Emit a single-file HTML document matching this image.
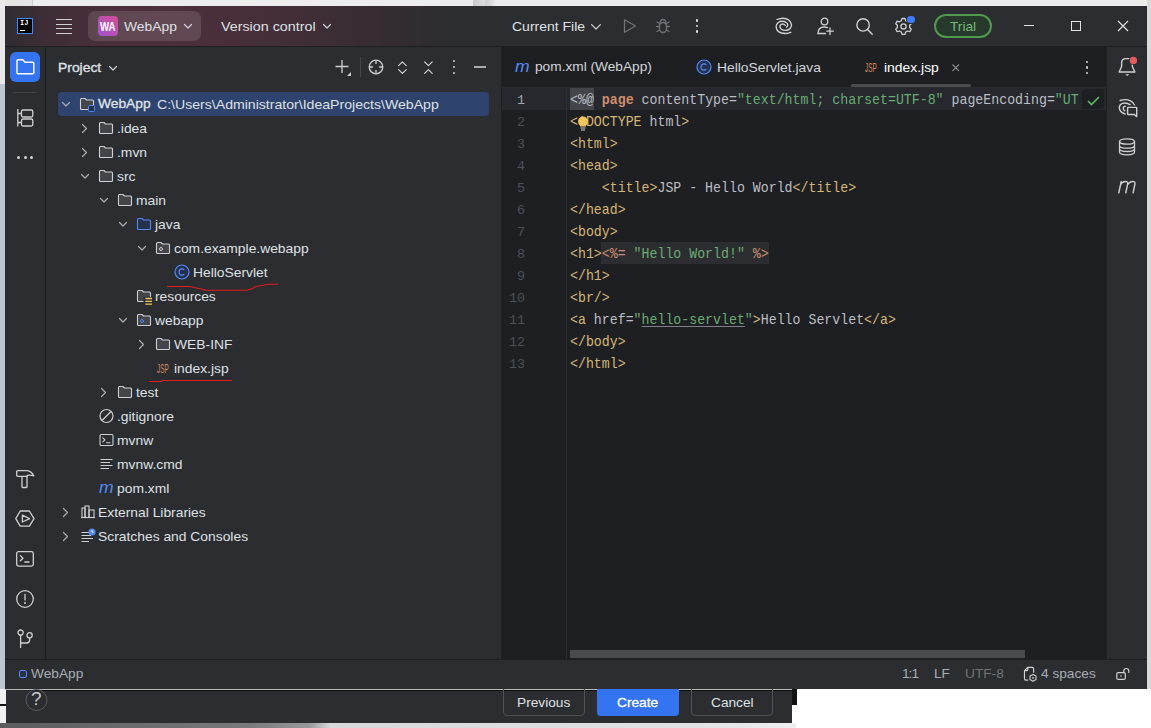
<!DOCTYPE html>
<html><head><meta charset="utf-8">
<style>
*{margin:0;padding:0;box-sizing:border-box}
html,body{width:1151px;height:728px;overflow:hidden;background:#ffffff}
body{position:relative;font-family:"Liberation Sans",sans-serif}
div,span.t{position:absolute}
.t{font-family:"Liberation Sans",sans-serif;color:#DFE1E5;font-size:13.7px;white-space:nowrap;line-height:16px;transform-origin:0 0;transform:scaleY(0.92)}
.code{position:absolute;font-family:"Liberation Mono",monospace;white-space:pre;font-size:14.6px;line-height:22px;color:#BCBEC4;left:570px;padding-top:0.5px;transform-origin:0 0;transform:scaleX(0.9075)}
svg{position:absolute;overflow:visible}
.ic{fill:none;stroke:#CED0D6;stroke-width:1.2;stroke-linecap:round;stroke-linejoin:round}
</style></head><body>

<div style="left:0;top:0;width:1151px;height:6px;background:#ededed"></div>
<div style="left:0;top:0;width:32px;height:6px;background:#e4e4e4"></div>
<div style="left:32px;top:0;width:1px;height:6px;background:#d0d0d0"></div>
<div style="left:473px;top:0;width:22px;height:6px;background:linear-gradient(90deg,#c8c8c8,#dadada 50%,#cfcfcf 60%,#e6e6e6)"></div>
<div style="left:0;top:0;width:5px;height:84px;background:#e8e8e8"></div>
<div style="left:0;top:84px;width:5px;height:605px;background:#bfc6d1"></div>
<div style="left:0;top:689px;width:7px;height:39px;background:#f0f0f0"></div>
<div style="left:0;top:704px;width:7px;height:1.5px;background:#111"></div>
<div style="left:1147px;top:0;width:4px;height:689px;background:#d9d9d9"></div>
<div style="left:6px;top:689px;width:786px;height:34px;background:#2B2D30"></div>
<div style="left:5px;top:689px;width:788px;height:1px;background:#b9b9b9"></div>
<div style="left:30px;top:690px;width:763px;height:1px;background:#0e0e0f"></div>
<div style="left:792px;top:689px;width:5px;height:16px;background:#111"></div>
<div style="left:0;top:723px;width:796px;height:5px;background:linear-gradient(90deg,#5c5c5c 0px,#7a7a7a 250px,#9a9a9a 310px,#d8d8d8 330px,#e2e2e2 700px,#eeeeee 796px)"></div>
<svg style="left:25px;top:689px" width="24" height="24"><circle cx="11.5" cy="11" r="10.5" fill="none" stroke="#5a5d63" stroke-width="1"/></svg>
<span class="t" style="left:31px;top:690px;font-size:19px;line-height:20px;color:#C4C6CC">?</span>
<div style="left:503px;top:686px;width:82px;height:30px;border:1px solid #4E5157;border-radius:4px"></div>
<span class="t" style="left:517px;top:696px;color:#DFE1E5">Previous</span>
<div style="left:597px;top:686px;width:82px;height:30px;background:#3574F0;border-radius:4px"></div>
<span class="t" style="left:617px;top:696px;color:#FFFFFF;-webkit-text-stroke:0.3px #fff">Create</span>
<div style="left:691px;top:686px;width:82px;height:30px;border:1px solid #4E5157;border-radius:4px"></div>
<span class="t" style="left:711px;top:696px;color:#DFE1E5">Cancel</span>
<div style="left:5px;top:6px;width:1142px;height:683px;background:#2B2D30"></div>
<div style="left:5px;top:6px;width:1142px;height:40px;background:linear-gradient(90deg,#2f2c31 0px,#3e2d37 40px,#4b2f3c 110px,#4d2f3d 170px,#432e38 280px,#352c33 380px,#2B2D30 450px)"></div>
<div style="left:5px;top:46px;width:1142px;height:1px;background:#1E1F22"></div>
<div style="left:17px;top:18px;width:16px;height:16px;background:#000;border:1.5px solid #3D8BFF"></div>
<span class="t" style="left:20px;top:19px;font-size:7px;line-height:8px;color:#fff;font-weight:bold;font-family:'Liberation Mono',monospace">IJ</span>
<div style="left:20px;top:29.6px;width:5px;height:1.3px;background:#fff"></div>
<div style="left:56px;top:19px;width:16px;height:1.3px;background:#CED0D6"></div>
<div style="left:56px;top:23.5px;width:16px;height:1.3px;background:#CED0D6"></div>
<div style="left:56px;top:28px;width:16px;height:1.3px;background:#CED0D6"></div>
<div style="left:56px;top:32.5px;width:16px;height:1.3px;background:#CED0D6"></div>
<div style="left:88px;top:11px;width:113px;height:30px;border-radius:7px;background:rgba(255,255,255,0.12)"></div>
<div style="left:98px;top:16px;width:20px;height:20px;border-radius:4px;background:linear-gradient(45deg,#9f52d4,#d24e90)"></div>
<svg style="left:99.5px;top:21px" width="16" height="10"><text x="0" y="9.7" textLength="15.5" lengthAdjust="spacingAndGlyphs" font-family="Liberation Sans" font-size="13" font-weight="bold" fill="#fff">WA</text></svg>
<span class="t" style="left:124px;top:19px;font-size:13.85px">WebApp</span>
<svg style="left:183.5px;top:24px" width="8" height="5"><path d="M0.5 0.5 L4.0 4 L7.5 0.5" fill="none" stroke="#CED0D6" stroke-width="1.2" stroke-linecap="round" stroke-linejoin="round"/></svg>
<span class="t" style="left:221px;top:19px;font-size:14.3px">Version control</span>
<svg style="left:323px;top:24px" width="8" height="5"><path d="M0.5 0.5 L4.0 4 L7.5 0.5" fill="none" stroke="#CED0D6" stroke-width="1.2" stroke-linecap="round" stroke-linejoin="round"/></svg>
<span class="t" style="left:512px;top:19px;font-size:14px">Current File</span>
<svg style="left:591px;top:24px" width="10" height="6"><path d="M0.6 0.6 L5 5 L9.4 0.6" fill="none" stroke="#CED0D6" stroke-width="1.2" stroke-linecap="round" stroke-linejoin="round"/></svg>
<svg style="left:622px;top:18px" width="16" height="16"><path d="M2.5 1.8 L13.5 8 L2.5 14.2 Z" fill="none" stroke="#6F737A" stroke-width="1.3" stroke-linejoin="round"/></svg>
<svg style="left:655px;top:18px" width="16" height="16"><g fill="none" stroke="#6C6F75" stroke-width="1.4" stroke-linecap="round"><path d="M5 6 Q5 1.5 8 1.5 Q11 1.5 11 6"/><rect x="4.5" y="4.5" width="7" height="10" rx="3.5"/><path d="M4.5 8.5 H1.5 M11.5 8.5 H14.5 M4.5 5.5 L2 4 M11.5 5.5 L14 4 M4.5 12 L2 13.5 M11.5 12 L14 13.5"/></g></svg>
<div style="left:696px;top:19.3px;width:2.4px;height:2.4px;border-radius:1.2px;background:#DFE1E5"></div>
<div style="left:696px;top:24.8px;width:2.4px;height:2.4px;border-radius:1.2px;background:#DFE1E5"></div>
<div style="left:696px;top:30.3px;width:2.4px;height:2.4px;border-radius:1.2px;background:#DFE1E5"></div>
<svg style="left:770px;top:14px" width="30" height="24"><g fill="none" stroke="#CED0D6" stroke-width="1.4" stroke-linecap="round"><path d="M7.10 5.40 C8.12 5.22 11.30 4.22 13.20 4.30 C15.10 4.38 17.13 4.92 18.50 5.90 C19.87 6.88 21.08 8.82 21.40 10.20 C21.72 11.58 21.17 13.20 20.40 14.20 C19.63 15.20 18.20 15.950 16.80 16.20 C15.40 16.45 13.13 16.20 12.00 15.70 C10.87 15.20 10.17 14.05 10.00 13.20 C9.83 12.35 10.42 11.12 11.00 10.60 C11.58 10.08 12.80 9.98 13.50 10.10 C14.20 10.22 14.92 11.10 15.20 11.30"/><path d="M20.80 18.30 C19.92 18.50 17.55 19.62 15.50 19.50 C13.45 19.38 10.07 18.77 8.50 17.60 C6.93 16.43 6.13 14.02 6.10 12.50 C6.07 10.98 7.22 9.37 8.30 8.50 C9.38 7.63 11.28 7.30 12.60 7.30 C13.92 7.30 15.33 7.92 16.20 8.50 C17.07 9.08 17.75 10.020 17.80 10.80 C17.85 11.58 17.05 12.87 16.50 13.20"/></g></svg>
<svg style="left:817px;top:17px" width="18" height="18"><g fill="none" stroke="#CED0D6" stroke-width="1.3" stroke-linecap="round"><circle cx="7.5" cy="4.5" r="3.3"/><path d="M1 16.5 C1 11.5 4 10 7.5 10 C8.5 10 9.5 10.2 10.5 10.6"/><path d="M1 16.5 H8.5"/><path d="M13 11 V17.5 M9.8 14.2 H16.3"/></g></svg>
<svg style="left:856px;top:18px" width="18" height="18"><g fill="none" stroke="#CED0D6" stroke-width="1.4" stroke-linecap="round"><circle cx="7.1" cy="6.9" r="6.2"/><path d="M11.6 11.4 L16.2 16.2"/></g></svg>
<svg style="left:895px;top:17px" width="18" height="18"><g fill="none" stroke="#CED0D6" stroke-width="1.3" stroke-linejoin="round"><path d="M7 1.5 H10 L10.6 3.7 L12.6 4.8 L14.8 4.1 L16.3 6.7 L14.6 8.3 V10.5 L16.3 12.1 L14.8 14.7 L12.6 14 L10.6 15.1 L10 17.3 H7 L6.4 15.1 L4.4 14 L2.2 14.7 L0.7 12.1 L2.4 10.5 V8.3 L0.7 6.7 L2.2 4.1 L4.4 4.8 L6.4 3.7 Z"/><circle cx="8.5" cy="9.4" r="2.6"/></g></svg>
<div style="left:907px;top:15.5px;width:7.5px;height:7.5px;border-radius:4px;background:#3D7DFF;box-shadow:0 0 0 1px #2B2D30"></div>
<div style="left:934px;top:14px;width:58px;height:24px;border-radius:12px;background:#27392A;border:2px solid #51994F"></div>
<span class="t" style="left:950px;top:20px;color:#73BD79">Trial</span>
<div style="left:1024px;top:25px;width:10px;height:1.2px;background:#DFE1E5"></div>
<div style="left:1071px;top:21px;width:10px;height:10px;border:1.2px solid #DFE1E5"></div>
<svg style="left:1118px;top:20.5px" width="10" height="10"><path d="M0 0 L10 10 M10 0 L0 10" stroke="#DFE1E5" stroke-width="1.2"/></svg>
<div style="left:45px;top:47px;width:1px;height:612px;background:#1E1F22"></div>
<div style="left:10px;top:52px;width:30px;height:30px;border-radius:6px;background:#3574F0"></div>
<svg style="left:16px;top:59px" width="19" height="16"><path d="M1 1.8 Q1 0.8 2 0.8 H6.8 L9 3.2 H16.8 Q17.8 3.2 17.8 4.2 V13.8 Q17.8 14.8 16.8 14.8 H2 Q1 14.8 1 13.8 Z" fill="none" stroke="#fff" stroke-width="1.4" stroke-linejoin="round"/></svg>
<div style="left:13px;top:92px;width:24px;height:1px;background:#43454A"></div>
<svg style="left:17px;top:108px" width="17" height="20"><g fill="none" stroke="#CED0D6" stroke-width="1.3"><path d="M0.8 1 V18.5 M0.8 5.5 H4.5 M0.8 14.5 H4.5"/><rect x="4.5" y="2" width="11.3" height="7" rx="1.5"/><rect x="4.5" y="11" width="11.3" height="7" rx="1.5"/></g></svg>
<div style="left:17.0px;top:156.2px;width:3px;height:3px;border-radius:1.5px;background:#CED0D6"></div>
<div style="left:23.5px;top:156.2px;width:3px;height:3px;border-radius:1.5px;background:#CED0D6"></div>
<div style="left:30.0px;top:156.2px;width:3px;height:3px;border-radius:1.5px;background:#CED0D6"></div>
<svg style="left:16px;top:470px" width="19" height="19"><g fill="none" stroke="#CED0D6" stroke-width="1.3" stroke-linejoin="round"><path d="M0.7 1.8 Q0.7 0.7 1.8 0.7 H10 Q15.2 0.7 17.8 5.8 Q14.5 4.6 11.2 5.3 V6.3 H1.8 Q0.7 6.3 0.7 5.2 Z"/><path d="M6 6.3 V16.8 Q6 17.5 6.7 17.5 H10.3 Q11 17.5 11 16.8 V6.3"/></g></svg>
<svg style="left:15px;top:510px" width="20" height="18"><g fill="none" stroke="#CED0D6" stroke-width="1.3" stroke-linejoin="round"><path d="M5.2 1 H14.4 L19 8.6 L14.4 16.2 H5.2 L0.8 8.6 Z"/><path d="M7.4 5.2 L14.6 8.6 L7.4 12 Z"/></g></svg>
<svg style="left:16px;top:551px" width="18" height="16"><g fill="none" stroke="#CED0D6" stroke-width="1.3" stroke-linecap="round" stroke-linejoin="round"><rect x="0.7" y="0.7" width="16.6" height="14.4" rx="1.8"/><path d="M4.3 4.6 L7 7.2 L4.3 9.8 M8.8 11 H13"/></g></svg>
<svg style="left:16px;top:590px" width="18" height="18"><g fill="none" stroke="#CED0D6" stroke-width="1.3" stroke-linecap="round"><circle cx="9" cy="9" r="8.3"/><path d="M9 4.5 V10"/></g><circle cx="9" cy="13" r="1" fill="#CED0D6"/></svg>
<svg style="left:16px;top:629px" width="18" height="20"><g fill="none" stroke="#CED0D6" stroke-width="1.3" stroke-linecap="round"><circle cx="4.6" cy="3.6" r="2.6"/><circle cx="13.6" cy="6.3" r="2.6"/><path d="M4.6 6.2 V18.4 M13.6 8.9 V11 Q13.6 14 10.6 14 H4.6"/></g></svg>
<div style="left:501px;top:47px;width:1px;height:612px;background:#1E1F22"></div>
<span class="t" style="left:58px;top:60px;font-size:13.9px;-webkit-text-stroke:0.35px #DFE1E5">Project</span>
<svg style="left:109px;top:65.5px" width="8" height="5"><path d="M0.5 0.5 L4.0 4 L7.5 0.5" fill="none" stroke="#CED0D6" stroke-width="1.2" stroke-linecap="round" stroke-linejoin="round"/></svg>
<svg style="left:335px;top:60px" width="18" height="16"><g stroke="#CED0D6" stroke-width="1.3"><path d="M7 0 V13 M0.5 6.5 H13.5"/></g><path d="M16 12 V16 H12 Z" fill="#CED0D6"/></svg>
<div style="left:359.5px;top:57px;width:1px;height:20px;background:#43454A"></div>
<svg style="left:368px;top:59px" width="16" height="16"><g fill="none" stroke="#CED0D6" stroke-width="1.3"><circle cx="8" cy="8" r="6.8"/><path d="M8 1.5 V5 M8 11 V14.5 M1.5 8 H5 M11 8 H14.5"/></g></svg>
<svg style="left:397.5px;top:60.5px" width="10" height="14"><g fill="none" stroke="#CED0D6" stroke-width="1.2" stroke-linecap="round" stroke-linejoin="round"><path d="M0.6 4.6 L4.4 0.8 L8.2 4.6 M0.6 8.6 L4.4 12.4 L8.2 8.6"/></g></svg>
<svg style="left:423.8px;top:60.5px" width="10" height="14"><g fill="none" stroke="#CED0D6" stroke-width="1.2" stroke-linecap="round" stroke-linejoin="round"><path d="M0.6 0.8 L4.4 4.6 L8.2 0.8 M0.6 12.4 L4.4 8.6 L8.2 12.4"/></g></svg>
<div style="left:452.8px;top:59.8px;width:2.4px;height:2.4px;border-radius:1.2px;background:#CED0D6"></div>
<div style="left:452.8px;top:65.8px;width:2.4px;height:2.4px;border-radius:1.2px;background:#CED0D6"></div>
<div style="left:452.8px;top:71.8px;width:2.4px;height:2.4px;border-radius:1.2px;background:#CED0D6"></div>
<div style="left:474px;top:66.4px;width:12px;height:1.3px;background:#A8ADB5"></div>
<div style="left:58px;top:92px;width:431px;height:24px;border-radius:4px;background:#2E436E"></div>
<svg style="left:62px;top:101.5px" width="8" height="5"><path d="M0.5 0.5 L4.0 4 L7.5 0.5" fill="none" stroke="#A8ADB5" stroke-width="1.2" stroke-linecap="round" stroke-linejoin="round"/></svg>
<svg style="left:79px;top:96px" width="16" height="16"><path d="M1.5 3.5 Q1.5 2.5 2.5 2.5 H6 L7.5 4 H13.5 Q14.5 4 14.5 5 V12.5 Q14.5 13.5 13.5 13.5 H2.5 Q1.5 13.5 1.5 12.5 Z" fill="#43454A" stroke="#CED0D6" stroke-width="1.1" stroke-linejoin="round"/></svg>
<div style="left:88px;top:105px;width:7px;height:7px;border:1.2px solid #548AF7;border-radius:1.5px;background:#25324D"></div>
<span class="t" style="left:98px;top:97px;font-size:13.8px;-webkit-text-stroke:0.35px #DFE1E5">WebApp</span>
<span class="t" style="left:157px;top:97px;font-size:14.1px">C:\Users\Administrator\IdeaProjects\WebApp</span>
<svg style="left:81.5px;top:123.5px" width="5" height="9"><path d="M0.5 0.5 L4.5 4.5 L0.5 8.5" fill="none" stroke="#A8ADB5" stroke-width="1.2" stroke-linecap="round" stroke-linejoin="round"/></svg>
<svg style="left:98px;top:120px" width="16" height="16"><path d="M1.5 3.5 Q1.5 2.5 2.5 2.5 H6 L7.5 4 H13.5 Q14.5 4 14.5 5 V12.5 Q14.5 13.5 13.5 13.5 H2.5 Q1.5 13.5 1.5 12.5 Z" fill="#43454A" stroke="#CED0D6" stroke-width="1.1" stroke-linejoin="round"/></svg>
<span class="t" style="left:117px;top:121px;font-size:13.85px">.idea</span>
<svg style="left:81.5px;top:147.5px" width="5" height="9"><path d="M0.5 0.5 L4.5 4.5 L0.5 8.5" fill="none" stroke="#A8ADB5" stroke-width="1.2" stroke-linecap="round" stroke-linejoin="round"/></svg>
<svg style="left:98px;top:144px" width="16" height="16"><path d="M1.5 3.5 Q1.5 2.5 2.5 2.5 H6 L7.5 4 H13.5 Q14.5 4 14.5 5 V12.5 Q14.5 13.5 13.5 13.5 H2.5 Q1.5 13.5 1.5 12.5 Z" fill="#43454A" stroke="#CED0D6" stroke-width="1.1" stroke-linejoin="round"/></svg>
<span class="t" style="left:117px;top:145px;font-size:13.85px">.mvn</span>
<svg style="left:81px;top:173.5px" width="8" height="5"><path d="M0.5 0.5 L4.0 4 L7.5 0.5" fill="none" stroke="#A8ADB5" stroke-width="1.2" stroke-linecap="round" stroke-linejoin="round"/></svg>
<svg style="left:98px;top:168px" width="16" height="16"><path d="M1.5 3.5 Q1.5 2.5 2.5 2.5 H6 L7.5 4 H13.5 Q14.5 4 14.5 5 V12.5 Q14.5 13.5 13.5 13.5 H2.5 Q1.5 13.5 1.5 12.5 Z" fill="#43454A" stroke="#CED0D6" stroke-width="1.1" stroke-linejoin="round"/></svg>
<span class="t" style="left:117px;top:169px;font-size:13.85px">src</span>
<svg style="left:100px;top:197.5px" width="8" height="5"><path d="M0.5 0.5 L4.0 4 L7.5 0.5" fill="none" stroke="#A8ADB5" stroke-width="1.2" stroke-linecap="round" stroke-linejoin="round"/></svg>
<svg style="left:117px;top:192px" width="16" height="16"><path d="M1.5 3.5 Q1.5 2.5 2.5 2.5 H6 L7.5 4 H13.5 Q14.5 4 14.5 5 V12.5 Q14.5 13.5 13.5 13.5 H2.5 Q1.5 13.5 1.5 12.5 Z" fill="#43454A" stroke="#CED0D6" stroke-width="1.1" stroke-linejoin="round"/></svg>
<span class="t" style="left:136px;top:193px;font-size:13.85px">main</span>
<svg style="left:119px;top:221.5px" width="8" height="5"><path d="M0.5 0.5 L4.0 4 L7.5 0.5" fill="none" stroke="#A8ADB5" stroke-width="1.2" stroke-linecap="round" stroke-linejoin="round"/></svg>
<svg style="left:136px;top:216px" width="16" height="16"><path d="M1.5 3.5 Q1.5 2.5 2.5 2.5 H6 L7.5 4 H13.5 Q14.5 4 14.5 5 V12.5 Q14.5 13.5 13.5 13.5 H2.5 Q1.5 13.5 1.5 12.5 Z" fill="#25324d" stroke="#548AF7" stroke-width="1.1" stroke-linejoin="round"/></svg>
<span class="t" style="left:155px;top:217px;font-size:13.85px">java</span>
<svg style="left:138px;top:245.5px" width="8" height="5"><path d="M0.5 0.5 L4.0 4 L7.5 0.5" fill="none" stroke="#A8ADB5" stroke-width="1.2" stroke-linecap="round" stroke-linejoin="round"/></svg>
<svg style="left:155px;top:240px" width="16" height="16"><path d="M1.5 3.5 Q1.5 2.5 2.5 2.5 H6 L7.5 4 H13.5 Q14.5 4 14.5 5 V12.5 Q14.5 13.5 13.5 13.5 H2.5 Q1.5 13.5 1.5 12.5 Z" fill="#43454A" stroke="#CED0D6" stroke-width="1.1" stroke-linejoin="round"/></svg>
<div style="left:159.3px;top:247px;width:4.2px;height:4.2px;border:1.1px solid #CED0D6;border-radius:2.1px"></div>
<span class="t" style="left:174px;top:241px;font-size:13.85px">com.example.webapp</span>
<svg style="left:174px;top:264px" width="16" height="16"><circle cx="8" cy="8" r="7" fill="#25324D" stroke="#548AF7" stroke-width="1.2"/><path d="M10.2 5.8 Q9.5 4.8 8.1 4.8 Q5.1 4.8 5.1 8 Q5.1 11.2 8.1 11.2 Q9.5 11.2 10.2 10.2" fill="none" stroke="#548AF7" stroke-width="1.2"/></svg>
<span class="t" style="left:193px;top:265px;font-size:13.85px">HelloServlet</span>
<svg style="left:136px;top:288px" width="16" height="16"><path d="M1.5 3.5 Q1.5 2.5 2.5 2.5 H6 L7.5 4 H13.5 Q14.5 4 14.5 5 V12.5 Q14.5 13.5 13.5 13.5 H2.5 Q1.5 13.5 1.5 12.5 Z" fill="#43454A" stroke="#CED0D6" stroke-width="1.1" stroke-linejoin="round"/></svg>
<svg style="left:143px;top:296px" width="12" height="10"><rect x="0.5" y="0.8" width="9" height="8.6" fill="#2B2D30"/><path d="M2.4 2.5 H9 M2.4 5.3 H9 M2.4 8.1 H9" stroke="#F2C55C" stroke-width="1.3"/></svg>
<span class="t" style="left:155px;top:289px;font-size:13.85px">resources</span>
<svg style="left:119px;top:317.5px" width="8" height="5"><path d="M0.5 0.5 L4.0 4 L7.5 0.5" fill="none" stroke="#A8ADB5" stroke-width="1.2" stroke-linecap="round" stroke-linejoin="round"/></svg>
<svg style="left:136px;top:312px" width="16" height="16"><path d="M1.5 3.5 Q1.5 2.5 2.5 2.5 H6 L7.5 4 H13.5 Q14.5 4 14.5 5 V12.5 Q14.5 13.5 13.5 13.5 H2.5 Q1.5 13.5 1.5 12.5 Z" fill="#43454A" stroke="#CED0D6" stroke-width="1.1" stroke-linejoin="round"/></svg>
<div style="left:140.3px;top:319px;width:4.2px;height:4.2px;border:1.1px solid #548AF7;border-radius:2.1px"></div>
<span class="t" style="left:155px;top:313px;font-size:13.85px">webapp</span>
<svg style="left:138.5px;top:339.5px" width="5" height="9"><path d="M0.5 0.5 L4.5 4.5 L0.5 8.5" fill="none" stroke="#A8ADB5" stroke-width="1.2" stroke-linecap="round" stroke-linejoin="round"/></svg>
<svg style="left:155px;top:336px" width="16" height="16"><path d="M1.5 3.5 Q1.5 2.5 2.5 2.5 H6 L7.5 4 H13.5 Q14.5 4 14.5 5 V12.5 Q14.5 13.5 13.5 13.5 H2.5 Q1.5 13.5 1.5 12.5 Z" fill="#43454A" stroke="#CED0D6" stroke-width="1.1" stroke-linejoin="round"/></svg>
<span class="t" style="left:174px;top:337px;font-size:13.85px">WEB-INF</span>
<svg style="left:157px;top:360px" width="16" height="16"><text x="0" y="13.2" textLength="11.6" lengthAdjust="spacingAndGlyphs" font-family="Liberation Sans" font-size="12.6" fill="#D88A5B">JSP</text></svg>
<span class="t" style="left:174px;top:361px;font-size:13.85px">index.jsp</span>
<svg style="left:100.5px;top:387.5px" width="5" height="9"><path d="M0.5 0.5 L4.5 4.5 L0.5 8.5" fill="none" stroke="#A8ADB5" stroke-width="1.2" stroke-linecap="round" stroke-linejoin="round"/></svg>
<svg style="left:117px;top:384px" width="16" height="16"><path d="M1.5 3.5 Q1.5 2.5 2.5 2.5 H6 L7.5 4 H13.5 Q14.5 4 14.5 5 V12.5 Q14.5 13.5 13.5 13.5 H2.5 Q1.5 13.5 1.5 12.5 Z" fill="#43454A" stroke="#CED0D6" stroke-width="1.1" stroke-linejoin="round"/></svg>
<span class="t" style="left:136px;top:385px;font-size:13.85px">test</span>
<svg style="left:99px;top:408px" width="16" height="16"><g fill="none" stroke="#CED0D6" stroke-width="1.2"><circle cx="7.5" cy="8" r="6.5"/><path d="M3 12.5 L12 3.5"/></g></svg>
<span class="t" style="left:117px;top:409px;font-size:13.85px">.gitignore</span>
<svg style="left:99px;top:432px" width="16" height="16"><g fill="none" stroke="#CED0D6" stroke-width="1.1" stroke-linecap="round" stroke-linejoin="round"><rect x="1" y="2.5" width="13" height="11" rx="1.3"/><path d="M3.8 5.8 L6 7.8 L3.8 9.8 M7.5 10.8 H11"/></g></svg>
<span class="t" style="left:117px;top:433px;font-size:13.85px">mvnw</span>
<svg style="left:99px;top:456px" width="16" height="16"><path d="M1.5 3.5 H13.5 M1.5 6.5 H11 M1.5 9.5 H13.5 M1.5 12.5 H10" stroke="#CED0D6" stroke-width="1.1"/></svg>
<span class="t" style="left:117px;top:457px;font-size:13.85px">mvnw.cmd</span>
<svg style="left:99px;top:480px" width="16" height="16"><text x="0" y="13.2" textLength="14.6" lengthAdjust="spacingAndGlyphs" font-family="Liberation Sans" font-style="italic" font-size="17" fill="#548AF7">m</text></svg>
<span class="t" style="left:117px;top:481px;font-size:13.85px">pom.xml</span>
<svg style="left:62.5px;top:507.5px" width="5" height="9"><path d="M0.5 0.5 L4.5 4.5 L0.5 8.5" fill="none" stroke="#A8ADB5" stroke-width="1.2" stroke-linecap="round" stroke-linejoin="round"/></svg>
<svg style="left:80px;top:504px" width="16" height="16"><g fill="none" stroke="#CED0D6" stroke-width="1.1"><path d="M1 13.5 H15"/><rect x="2" y="4" width="3" height="9.5"/><rect x="5" y="2" width="4" height="11.5"/><rect x="9" y="6" width="5" height="7.5"/></g></svg>
<span class="t" style="left:98px;top:505px;font-size:13.85px">External Libraries</span>
<svg style="left:62.5px;top:531.5px" width="5" height="9"><path d="M0.5 0.5 L4.5 4.5 L0.5 8.5" fill="none" stroke="#A8ADB5" stroke-width="1.2" stroke-linecap="round" stroke-linejoin="round"/></svg>
<svg style="left:80px;top:528px" width="16" height="16"><path d="M1.5 4.5 H9 M1.5 7.5 H11 M1.5 10.5 H13 M1.5 13.5 H9" stroke="#CED0D6" stroke-width="1.1"/><circle cx="12" cy="4" r="3.6" fill="#548AF7"/><path d="M12 2 V4 H13.5" stroke="#fff" stroke-width="0.9" fill="none"/></svg>
<span class="t" style="left:98px;top:529px;font-size:13.85px">Scratches and Consoles</span>
<svg style="left:0;top:0" width="1" height="1"><path d="M167 286.5 L190 286.5 L194 287.5 L201 289 L206 290.3 L246.5 290.3 L252.5 288.5 L256 286.5 L261.5 285.5 L269 284.3 L278 284.3" fill="none" stroke="#E51B1B" stroke-width="1.1"/></svg>
<svg style="left:0;top:0" width="1" height="1"><path d="M149 381.5 L161.5 381.5 L162.5 380.5 L232 380.5" fill="none" stroke="#E51B1B" stroke-width="1.1"/></svg>
<div style="left:502px;top:47px;width:604px;height:612px;background:#1E1F22"></div>
<div style="left:502px;top:87px;width:604px;height:1px;background:#2B2D30"></div>
<svg style="left:515px;top:60px" width="16" height="14"><text x="0" y="12.2" textLength="14.6" lengthAdjust="spacingAndGlyphs" font-family="Liberation Sans" font-style="italic" font-size="17" fill="#548AF7">m</text></svg>
<span class="t" style="left:535px;top:60px;color:#D3D5DA">pom.xml (WebApp)</span>
<svg style="left:696px;top:59px" width="16" height="16"><circle cx="8" cy="8" r="7" fill="#25324D" stroke="#548AF7" stroke-width="1.2"/><path d="M10.2 5.8 Q9.5 4.8 8.1 4.8 Q5.1 4.8 5.1 8 Q5.1 11.2 8.1 11.2 Q9.5 11.2 10.2 10.2" fill="none" stroke="#548AF7" stroke-width="1.2"/></svg>
<span class="t" style="left:717px;top:60px;color:#D3D5DA;font-size:13.85px">HelloServlet.java</span>
<svg style="left:865px;top:59px" width="16" height="16"><text x="0" y="13.2" textLength="11.6" lengthAdjust="spacingAndGlyphs" font-family="Liberation Sans" font-size="12.6" fill="#D88A5B">JSP</text></svg>
<span class="t" style="left:884px;top:60px;color:#FFFFFF;font-size:13.9px">index.jsp</span>
<svg style="left:951.5px;top:63.5px" width="8" height="8"><path d="M0.5 0.5 L7 7 M7 0.5 L0.5 7" stroke="#868A91" stroke-width="1.1"/></svg>
<div style="left:851px;top:84px;width:120px;height:3px;border-radius:1.5px;background:#4A4C50"></div>
<div style="left:1085.6px;top:60.8px;width:2.4px;height:2.4px;border-radius:1.2px;background:#CED0D6"></div>
<div style="left:1085.6px;top:66.3px;width:2.4px;height:2.4px;border-radius:1.2px;background:#CED0D6"></div>
<div style="left:1085.6px;top:71.8px;width:2.4px;height:2.4px;border-radius:1.2px;background:#CED0D6"></div>
<div style="left:502px;top:88px;width:604px;height:22px;background:#26282E"></div>
<div style="left:569.5px;top:88px;width:24.5px;height:22px;background:#43454A"></div>
<div style="left:601px;top:242px;width:168px;height:22px;background:#2B2D30"></div>
<div style="left:566px;top:88px;width:1px;height:571px;background:#2B2D30"></div>
<span class="t mono" style="left:460px;width:65px;text-align:right;top:89.5px;font-family:'Liberation Mono',monospace;font-size:13.33px;line-height:22px;color:#A1A3AB;transform:none">1</span>
<span class="t mono" style="left:460px;width:65px;text-align:right;top:111.5px;font-family:'Liberation Mono',monospace;font-size:13.33px;line-height:22px;color:#4B5059;transform:none">2</span>
<span class="t mono" style="left:460px;width:65px;text-align:right;top:133.5px;font-family:'Liberation Mono',monospace;font-size:13.33px;line-height:22px;color:#4B5059;transform:none">3</span>
<span class="t mono" style="left:460px;width:65px;text-align:right;top:155.5px;font-family:'Liberation Mono',monospace;font-size:13.33px;line-height:22px;color:#4B5059;transform:none">4</span>
<span class="t mono" style="left:460px;width:65px;text-align:right;top:177.5px;font-family:'Liberation Mono',monospace;font-size:13.33px;line-height:22px;color:#4B5059;transform:none">5</span>
<span class="t mono" style="left:460px;width:65px;text-align:right;top:199.5px;font-family:'Liberation Mono',monospace;font-size:13.33px;line-height:22px;color:#4B5059;transform:none">6</span>
<span class="t mono" style="left:460px;width:65px;text-align:right;top:221.5px;font-family:'Liberation Mono',monospace;font-size:13.33px;line-height:22px;color:#4B5059;transform:none">7</span>
<span class="t mono" style="left:460px;width:65px;text-align:right;top:243.5px;font-family:'Liberation Mono',monospace;font-size:13.33px;line-height:22px;color:#4B5059;transform:none">8</span>
<span class="t mono" style="left:460px;width:65px;text-align:right;top:265.5px;font-family:'Liberation Mono',monospace;font-size:13.33px;line-height:22px;color:#4B5059;transform:none">9</span>
<span class="t mono" style="left:460px;width:65px;text-align:right;top:287.5px;font-family:'Liberation Mono',monospace;font-size:13.33px;line-height:22px;color:#4B5059;transform:none">10</span>
<span class="t mono" style="left:460px;width:65px;text-align:right;top:309.5px;font-family:'Liberation Mono',monospace;font-size:13.33px;line-height:22px;color:#4B5059;transform:none">11</span>
<span class="t mono" style="left:460px;width:65px;text-align:right;top:331.5px;font-family:'Liberation Mono',monospace;font-size:13.33px;line-height:22px;color:#4B5059;transform:none">12</span>
<span class="t mono" style="left:460px;width:65px;text-align:right;top:353.5px;font-family:'Liberation Mono',monospace;font-size:13.33px;line-height:22px;color:#4B5059;transform:none">13</span>
<div class="code" style="top:88px"><span style="color:#BCBEC4;">&lt;%@</span> <span style="color:#CF8E6D;font-weight:bold">page</span> <span style="color:#BCBEC4;">contentType=</span><span style="color:#6AAB73;">"text/html; charset=UTF-8"</span> <span style="color:#BCBEC4;">pageEncoding=</span><span style="color:#6AAB73;">"UT</span></div>
<div class="code" style="top:110px"><span style="color:#D5B778;">&lt;!DOCTYPE</span><span style="color:#BCBEC4;"> html</span><span style="color:#D5B778;">&gt;</span></div>
<div class="code" style="top:132px"><span style="color:#D5B778;">&lt;html&gt;</span></div>
<div class="code" style="top:154px"><span style="color:#D5B778;">&lt;head&gt;</span></div>
<div class="code" style="top:176px">    <span style="color:#D5B778;">&lt;title&gt;</span><span style="color:#BCBEC4;">JSP - Hello World</span><span style="color:#D5B778;">&lt;/title&gt;</span></div>
<div class="code" style="top:198px"><span style="color:#D5B778;">&lt;/head&gt;</span></div>
<div class="code" style="top:220px"><span style="color:#D5B778;">&lt;body&gt;</span></div>
<div class="code" style="top:242px"><span style="color:#D5B778;">&lt;h1&gt;</span><span style="color:#CF8E6D;">&lt;%=</span> <span style="color:#6AAB73;">"Hello World!"</span> <span style="color:#CF8E6D;">%&gt;</span></div>
<div class="code" style="top:264px"><span style="color:#D5B778;">&lt;/h1&gt;</span></div>
<div class="code" style="top:286px"><span style="color:#D5B778;">&lt;br/&gt;</span></div>
<div class="code" style="top:308px"><span style="color:#D5B778;">&lt;a</span><span style="color:#BCBEC4;"> href=</span><span style="color:#6AAB73;">"</span><span style="color:#6AAB73;text-decoration:underline;text-decoration-color:#7E8188;text-underline-offset:2px">hello-servlet</span><span style="color:#6AAB73;">"</span><span style="color:#D5B778;">&gt;</span><span style="color:#BCBEC4;">Hello Servlet</span><span style="color:#D5B778;">&lt;/a&gt;</span></div>
<div class="code" style="top:330px"><span style="color:#D5B778;">&lt;/body&gt;</span></div>
<div class="code" style="top:352px"><span style="color:#D5B778;">&lt;/html&gt;</span></div>
<svg style="left:577px;top:116px" width="12" height="16"><path d="M1 5.5 A5 5 0 1 1 11 5.5 Q11 8 9 9.5 V10.5 H3 V9.5 Q1 8 1 5.5 Z" fill="#F2C55C"/><path d="M3.5 12 H8.5 M4 14 H8" stroke="#CED0D6" stroke-width="1"/></svg>
<div style="left:1082px;top:89px;width:22px;height:20px;background:#1E1F22;border-radius:3px"></div>
<svg style="left:1087px;top:96px" width="13" height="10"><path d="M1 5 L4.5 8.5 L12 1" fill="none" stroke="#5FB865" stroke-width="1.6"/></svg>
<div style="left:570px;top:650px;width:455px;height:8px;background:#4A4B4E"></div>
<div style="left:1106px;top:47px;width:41px;height:612px;background:#2B2D30;border-left:1px solid #1E1F22"></div>
<svg style="left:1112px;top:52px" width="30" height="30"><g fill="none" stroke="#CED0D6" stroke-width="1.4" stroke-linejoin="round" stroke-linecap="round"><path d="M16.8 6.6 H14 Q9.6 6.6 9.6 11 V14.5 L7.2 20 H22.9 L20.3 14.5 V13.3"/></g><path d="M13.2 22.2 H17.3 L15.25 23.9 Z" fill="#CED0D6"/><circle cx="21.4" cy="8.4" r="3.7" fill="#E55B5B"/></svg>
<svg style="left:1112px;top:94px" width="30" height="30"><g fill="none" stroke="#CED0D6" stroke-width="1.4" stroke-linecap="round" stroke-linejoin="round"><path d="M8.2 6.5 Q14 4.6 18.5 6.8 Q21.6 8.5 22.4 10.9"/><path d="M18.1 10.6 Q14.2 8.2 10.3 9.3 Q7.3 10.6 7.3 13.8 Q7.5 18.2 13.1 20"/><path d="M13.3 12.3 Q11.3 12.3 11.2 14.2 Q11.2 15.9 12.8 16.8"/><path d="M15.6 14.1 Q15.6 13.4 16.3 13.4 H24 Q24.7 13.4 24.7 14.1 V22.6 L22.3 20.5 H16.3 Q15.6 20.5 15.6 19.8 Z"/></g></svg>
<svg style="left:1118px;top:138px" width="18" height="18"><g fill="none" stroke="#CED0D6" stroke-width="1.3"><ellipse cx="9" cy="3.5" rx="7.5" ry="2.7"/><path d="M1.5 3.5 V14 Q1.5 16.8 9 16.8 Q16.5 16.8 16.5 14 V3.5 M1.5 7.5 Q1.5 10.2 9 10.2 Q16.5 10.2 16.5 7.5 M1.5 10.8 Q1.5 13.5 9 13.5 Q16.5 13.5 16.5 10.8"/></g></svg>
<svg style="left:1112px;top:178px" width="30" height="18"><path d="M6.8 14.8 L9.2 3.6 M8.5 6.6 Q10.3 3.4 13.2 3.4 Q16.2 3.5 15.6 6.2 L13.8 14.8 M15.6 6.6 Q17.6 3.4 20.5 3.4 Q23.5 3.5 22.9 6.2 L21.1 14.8" fill="none" stroke="#CED0D6" stroke-width="1.45" stroke-linecap="round" stroke-linejoin="round"/></svg>
<div style="left:5px;top:659px;width:1142px;height:1px;background:#1E1F22"></div>
<div style="left:19px;top:670px;width:8px;height:8px;border:1.3px solid #548AF7;border-radius:2px;background:#25324d"></div>
<span class="t" style="left:31px;top:667px;color:#A8ADB5">WebApp</span>
<span class="t" style="left:902px;top:667px;color:#A8ADB5;letter-spacing:-1px">1:1</span>
<span class="t" style="left:934px;top:667px;color:#A8ADB5">LF</span>
<span class="t" style="left:965px;top:667px;color:#6F737A">UTF-8</span>
<svg style="left:1018px;top:662px" width="22" height="22"><g fill="none" stroke="#CED0D6" stroke-width="1.2" stroke-linejoin="round"><path d="M10.2 18.1 H7.8 Q6.5 18.1 6.5 16.8 V8.6 L9.9 5.3 H14.2 Q15.6 5.3 15.6 6.7 V10.8"/><path d="M6.5 8.6 H8.6 Q9.9 8.6 9.9 7.3 V5.3"/><path d="M15 12.4 L18 14.1 V17.6 L15 19.3 L12 17.6 V14.1 Z" stroke-width="1.1"/></g><circle cx="15" cy="15.9" r="0.9" fill="#CED0D6"/></svg>
<span class="t" style="left:1041px;top:667px;color:#A8ADB5">4 spaces</span>
<svg style="left:1110px;top:662px" width="22" height="22"><g fill="none" stroke="#CED0D6" stroke-width="1.2"><rect x="6.8" y="10.6" width="8.5" height="6.8" rx="1.5"/><path d="M13.8 10.6 V9 A2.5 2.5 0 0 1 18.8 9 V10.4" stroke-linecap="round"/></g><rect x="10.3" y="13" width="1.3" height="2" fill="#9a9ca3"/></svg>
</body></html>
